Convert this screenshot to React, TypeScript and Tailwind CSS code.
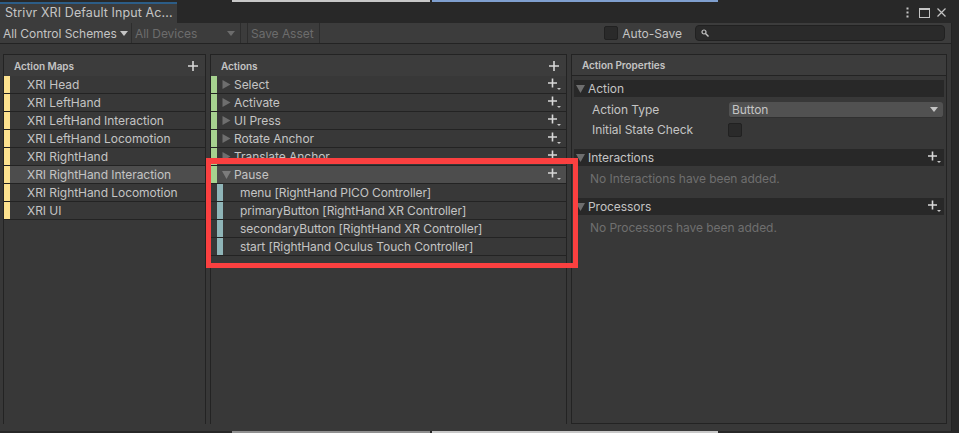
import React from "react";

const maps = [
  "XRI Head",
  "XRI LeftHand",
  "XRI LeftHand Interaction",
  "XRI LeftHand Locomotion",
  "XRI RightHand",
  "XRI RightHand Interaction",
  "XRI RightHand Locomotion",
  "XRI UI",
];

const actions = ["Select", "Activate", "UI Press", "Rotate Anchor", "Translate Anchor"];

const bindings = [
  "menu [RightHand PICO Controller]",
  "primaryButton [RightHand XR Controller]",
  "secondaryButton [RightHand XR Controller]",
  "start [RightHand Oculus Touch Controller]",
];

function Triangle({ down, color = "#6e6e6e" }: { down?: boolean; color?: string }) {
  return (
    <svg width="9" height="9" viewBox="0 0 9 9" className="shrink-0">
      <polygon points={down ? "0,1 9,1 4.5,9" : "0.5,0 8.5,4.5 0.5,9"} fill={color} />
    </svg>
  );
}

function PlusMore() {
  return (
    <svg width="13" height="13" viewBox="0 0 13 13" className="shrink-0">
      <path d="M4.5 0.5v9M0 5h9" stroke="#d8d8d8" strokeWidth="1.6" />
      <polygon points="9,10 13,10 11,12" fill="#c4c4c4" />
    </svg>
  );
}

function Plus() {
  return (
    <svg width="10" height="10" viewBox="0 0 10 10" className="shrink-0">
      <path d="M5 0v10M0 5h10" stroke="#d8d8d8" strokeWidth="1.6" />
    </svg>
  );
}

function SectionHeader({ title, plus }: { title: string; plus?: boolean }) {
  return (
    <div className="h-[17px] mx-[2px] bg-[#282828] flex items-center pl-[2px] pr-[3px]">
      <Triangle down />
      <span className="ml-[3px] text-[#c4c4c4]">{title}</span>
      {plus && (
        <span className="ml-auto">
          <PlusMore />
        </span>
      )}
    </div>
  );
}

export default function App() {
  return (
    <div
      className="relative w-[959px] h-[433px] overflow-hidden bg-[#282828] flex flex-col text-[12px] leading-none tracking-[-0.05px] text-[#c4c4c4]"
      style={{ fontFamily: "Inter, 'Liberation Sans', sans-serif" }}
    >
      {/* strip of the window above */}
      <div className="h-[2px] flex shrink-0">
        <div className="w-[232px] bg-[#282828]" />
        <div className="w-[198px] bg-[#c8c8c8]" />
        <div className="w-[2px] bg-[#282828]" />
        <div className="w-[286px] bg-[#7f9fcf]" />
      </div>

      {/* tab bar */}
      <div className="h-[21px] flex shrink-0 w-[952px]">
        <div className="w-[177px] h-full bg-[#3c3c3c] border-t-2 border-[#2c5d87] flex items-center pl-[5px] text-[12.5px] tracking-[0.1px]">
          Strivr XRI Default Input Ac...
        </div>
        <div className="ml-auto flex items-center gap-[7px] pr-[5px] text-[#c4c4c4]">
          <svg width="3" height="11" viewBox="0 0 3 11">
            <rect x="0.5" y="0.5" width="2" height="2" fill="#c4c4c4" />
            <rect x="0.5" y="4.5" width="2" height="2" fill="#c4c4c4" />
            <rect x="0.5" y="8.5" width="2" height="2" fill="#c4c4c4" />
          </svg>
          <svg width="11" height="10" viewBox="0 0 11 10" className="ml-[3px]">
            <rect x="0.5" y="0.5" width="10" height="9" fill="none" stroke="#c4c4c4" />
            <rect x="0" y="0" width="11" height="2" fill="#c4c4c4" />
          </svg>
          <svg width="9" height="9" viewBox="0 0 9 9" className="mr-[1px]">
            <path d="M0.5 0.5l8 8M8.5 0.5l-8 8" stroke="#c4c4c4" strokeWidth="1.2" />
          </svg>
        </div>
      </div>

      {/* main window */}
      <div className="w-[952px] flex-1 bg-[#383838] flex flex-col min-h-0 border-r border-[#232323]">
        {/* toolbar */}
        <div className="h-[21px] shrink-0 bg-[#3c3c3c] border-b border-[#232323] flex items-center">
          <div className="w-[132px] h-full flex items-center pl-[3px] pt-[1px] border-r border-[#2d2d2d]">
            All Control Schemes
            <span className="ml-[3px]">
              <svg width="8" height="5" viewBox="0 0 8 5">
                <polygon points="0,0 8,0 4,5" fill="#c4c4c4" />
              </svg>
            </span>
          </div>
          <div className="w-[109px] h-full flex items-center pl-[3px] pt-[1px] text-[#6c6c6c] border-r border-[#2d2d2d]">
            All Devices
            <span className="ml-auto mr-[5px]">
              <svg width="8" height="5" viewBox="0 0 8 5">
                <polygon points="0,0 8,0 4,5" fill="#6c6c6c" />
              </svg>
            </span>
          </div>
          <div className="ml-[6px] w-[73px] h-full flex items-center pl-[3px] pt-[1px] text-[#6c6c6c] border-x border-[#2d2d2d]">
            Save Asset
          </div>
          <div className="ml-auto flex items-center">
            <div className="w-[14px] h-[14px] rounded-[2px] bg-[#2a2a2a] border border-[#212121]" />
            <span className="ml-[4px] mt-[2px] tracking-normal">Auto-Save</span>
            <div className="ml-[13px] mr-[6px] w-[250px] h-[16px] rounded-[4px] bg-[#2a2a2a] border border-[#212121] flex items-center pl-[5px]">
              <svg width="8" height="8" viewBox="0 0 8 8">
                <circle cx="3" cy="3" r="2" fill="none" stroke="#c4c4c4" strokeWidth="1.2" />
                <path d="M4.5 4.5L7.5 7.5" stroke="#c4c4c4" strokeWidth="1.4" />
              </svg>
            </div>
          </div>
        </div>

        {/* panels */}
        <div className="flex-1 min-h-0 flex pt-[10px] pb-[7px] pl-[3px] pr-[4px] gap-[4px]">
          {/* Action Maps */}
          <div className="w-[203px] shrink-0 border-x border-t border-[#232323] flex flex-col">
            <div className="h-[21px] shrink-0 bg-[#3c3c3c] flex items-center justify-between pl-[10px] pr-[7px] text-[10px] font-semibold">
              Action Maps
              <Plus />
            </div>
            {maps.map((m, i) => (
              <div
                key={m}
                className={`h-[18px] shrink-0 flex items-center border-b border-[#232323] ${
                  i === 5 ? "bg-[#4d4d4d]" : ""
                }`}
              >
                <div className="w-[6px] h-full bg-[#fde28f] shrink-0" />
                <span className="ml-[17px]">{m}</span>
              </div>
            ))}
          </div>

          {/* Actions */}
          <div className="w-[357px] shrink-0 border-x border-t border-[#232323] flex flex-col">
            <div className="h-[21px] shrink-0 bg-[#3c3c3c] flex items-center justify-between pl-[10px] pr-[7px] text-[10px] font-semibold">
              Actions
              <Plus />
            </div>
            {actions.map((a) => (
              <div key={a} className="h-[18px] shrink-0 flex items-center border-b border-[#232323] pr-[5px]">
                <div className="w-[6px] h-full bg-[#a6d28f] shrink-0" />
                <span className="ml-[5px]">
                  <Triangle />
                </span>
                <span className="ml-[3px]">{a}</span>
                <span className="ml-auto">
                  <PlusMore />
                </span>
              </div>
            ))}
            <div className="h-[18px] shrink-0 flex items-center border-b border-[#232323] bg-[#4d4d4d] pr-[5px]">
              <div className="w-[6px] h-full bg-[#a6d28f] shrink-0" />
              <span className="ml-[5px]">
                <Triangle down color="#7c7c7c" />
              </span>
              <span className="ml-[3px]">Pause</span>
              <span className="ml-auto">
                <PlusMore />
              </span>
            </div>
            {bindings.map((b) => (
              <div key={b} className="h-[18px] shrink-0 flex items-center border-b border-[#232323]">
                <div className="ml-[6px] w-[6px] h-full bg-[#8fb5b8] shrink-0" />
                <span className="ml-[17px] tracking-[-0.1px]">{b}</span>
              </div>
            ))}
          </div>

          {/* Action Properties */}
          <div className="flex-1 border border-[#232323] flex flex-col">
            <div className="h-[21px] shrink-0 bg-[#3c3c3c] border-b border-[#232323] flex items-center pl-[10px] text-[10px] font-semibold">
              Action Properties
            </div>
            <div className="pt-[4px] flex flex-col">
              <SectionHeader title="Action" />
              <div className="h-[23px] flex items-center pl-[20px] pr-[3px] pt-[3px]">
                <span className="w-[137px]">Action Type</span>
                <div className="flex-1 h-[16px] rounded-[3px] bg-[#515151] border-b border-[#303030] flex items-center justify-between pl-[3px] pr-[5px]">
                  Button
                  <svg width="8" height="5" viewBox="0 0 8 5">
                    <polygon points="0,0 8,0 4,5" fill="#c4c4c4" />
                  </svg>
                </div>
              </div>
              <div className="h-[20px] flex items-center pl-[20px]">
                <span className="w-[136px]">Initial State Check</span>
                <div className="w-[14px] h-[14px] rounded-[2px] bg-[#2a2a2a] border border-[#212121]" />
              </div>
              <div className="h-[9px]" />
              <SectionHeader title="Interactions" plus />
              <div className="h-[32px] pl-[18px] pb-[6px] flex items-center text-[#6f6f6f]">
                No Interactions have been added.
              </div>
              <SectionHeader title="Processors" plus />
              <div className="h-[25px] pl-[18px] flex items-center text-[#6f6f6f]">
                No Processors have been added.
              </div>
            </div>
          </div>
        </div>
      </div>

      {/* strip of the window below */}
      <div className="h-[2px] flex shrink-0">
        <div className="w-[232px] bg-[#282828]" />
        <div className="w-[198px] bg-[#8f8f8f]" />
        <div className="w-[2px] bg-[#282828]" />
        <div className="w-[286px] bg-[#c8c8c8]" />
      </div>

      {/* red annotation */}
      <div className="absolute left-[206px] top-[158px] w-[372px] h-[110px] border-x-[5px] border-t-[6px] border-b-[5px] border-[#fb4040]" />
    </div>
  );
}
